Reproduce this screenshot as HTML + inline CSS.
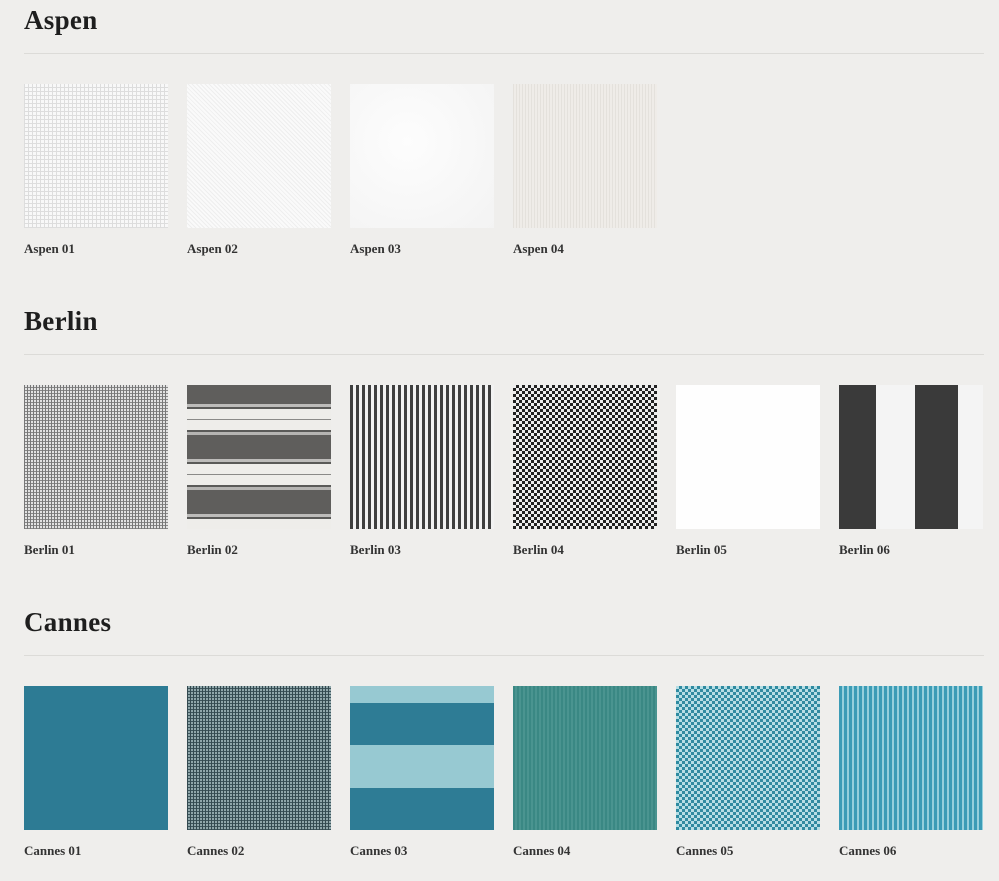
<!DOCTYPE html>
<html><head><meta charset="utf-8"><style>
*{margin:0;padding:0;box-sizing:border-box}
body{width:999px;height:881px;background:#efeeec;font-family:"Liberation Serif",serif;color:#1e1e1e;position:relative;overflow:hidden}
h2{position:absolute;left:24px;font-size:27px;font-weight:bold;letter-spacing:0.3px}
.hr{position:absolute;left:24px;width:960px;height:1px;background:#dcdbd8}
.sw{position:absolute;width:144px;height:144px}
.lb{position:absolute;font-size:13px;font-weight:bold;color:#333}
</style></head><body>
<h2 style="top:5px">Aspen</h2><div class="hr" style="top:53px"></div>
<h2 style="top:306px">Berlin</h2><div class="hr" style="top:354px"></div>
<h2 style="top:607px">Cannes</h2><div class="hr" style="top:655px"></div>

<div class="sw" style="left:24px;top:84px;background:repeating-linear-gradient(90deg,#ddd 0 1px,transparent 1px 4px),repeating-linear-gradient(0deg,#ddd 0 1px,#f8f8f8 1px 4px)"></div>
<div class="sw" style="left:187px;top:84px;background:repeating-linear-gradient(45deg,#eee 0 1px,#fafafa 1px 3px)"></div>
<div class="sw" style="left:350px;top:84px;background:radial-gradient(circle at 40% 40%,#fdfdfd,#f3f3f3)"></div>
<div class="sw" style="left:513px;top:84px;background:repeating-linear-gradient(90deg,#e4e1dc 0 1px,#efece8 1px 3px)"></div>

<div class="sw" style="left:24px;top:385px;background:repeating-linear-gradient(90deg,#777 0 1px,transparent 1px 3px),repeating-linear-gradient(0deg,#888 0 1px,#e2e2e2 1px 3px)"></div>
<div class="sw" style="left:187px;top:385px;background:repeating-linear-gradient(180deg,#5f5e5c 0 19px,#bdbcba 19px 22px,#5a5a58 22px 24px,#eeedea 24px 34px,#8a8a88 34px 35px,#eeedea 35px 45px,#5a5a58 45px 47px,#b5b4b2 47px 50px,#5f5e5c 50px 55px)"></div>
<div class="sw" style="left:350px;top:385px;background:repeating-linear-gradient(90deg,#3f3f3f 0 3px,#f2f2f2 3px 6px)"></div>
<div class="sw" style="left:513px;top:385px;background:repeating-conic-gradient(#222 0 25%,#eee 0 50%) 0 0/6px 6px"></div>
<div class="sw" style="left:676px;top:385px;background:#fefefe"></div>
<div class="sw" style="left:839px;top:385px;background:linear-gradient(90deg,#3a3a3a 0 37px,#f4f4f4 37px 76px,#3a3a3a 76px 119px,#f4f4f4 119px)"></div>

<div class="sw" style="left:24px;top:686px;background:#2d7b94"></div>
<div class="sw" style="left:187px;top:686px;background:repeating-linear-gradient(90deg,#33494f 0 1px,transparent 1px 3px),repeating-linear-gradient(0deg,#3d555c 0 1px,#8fa6aa 1px 3px)"></div>
<div class="sw" style="left:350px;top:686px;background:linear-gradient(180deg,#97c9d2 0 17px,#2e7c95 17px 59px,#97c9d2 59px 102px,#2e7c95 102px)"></div>
<div class="sw" style="left:513px;top:686px;background:repeating-linear-gradient(90deg,#3a8884 0 2px,#4a9490 2px 4px)"></div>
<div class="sw" style="left:676px;top:686px;background:repeating-conic-gradient(#2f8aa0 0 25%,#b5dde4 0 50%) 0 0/6px 6px"></div>
<div class="sw" style="left:839px;top:686px;background:repeating-linear-gradient(90deg,#3c9cb6 0 3px,#96d0dc 3px 5px)"></div>

<div class="lb" style="left:24px;top:241px">Aspen 01</div>
<div class="lb" style="left:187px;top:241px">Aspen 02</div>
<div class="lb" style="left:350px;top:241px">Aspen 03</div>
<div class="lb" style="left:513px;top:241px">Aspen 04</div>
<div class="lb" style="left:24px;top:542px">Berlin 01</div>
<div class="lb" style="left:187px;top:542px">Berlin 02</div>
<div class="lb" style="left:350px;top:542px">Berlin 03</div>
<div class="lb" style="left:513px;top:542px">Berlin 04</div>
<div class="lb" style="left:676px;top:542px">Berlin 05</div>
<div class="lb" style="left:839px;top:542px">Berlin 06</div>
<div class="lb" style="left:24px;top:843px">Cannes 01</div>
<div class="lb" style="left:187px;top:843px">Cannes 02</div>
<div class="lb" style="left:350px;top:843px">Cannes 03</div>
<div class="lb" style="left:513px;top:843px">Cannes 04</div>
<div class="lb" style="left:676px;top:843px">Cannes 05</div>
<div class="lb" style="left:839px;top:843px">Cannes 06</div>
</body></html>
